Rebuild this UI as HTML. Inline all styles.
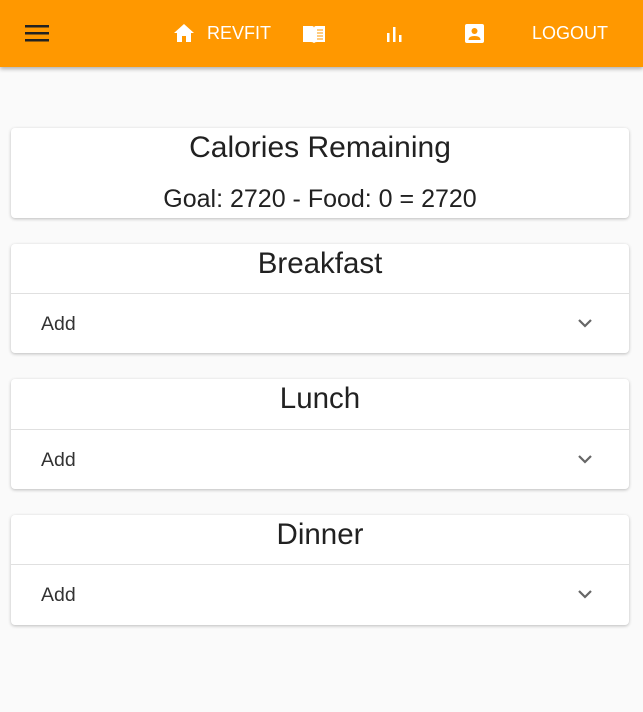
<!DOCTYPE html>
<html><head><style>
body{margin:0;width:643px;height:712px;background:#fafafa;font-family:"Liberation Sans",sans-serif;color:#212121;overflow:hidden;position:relative}
.hdr{position:absolute;left:0;top:0;width:643px;height:67px;background:#ff9800;box-shadow:0 2px 4px rgba(0,0,0,.3)}
.hdr .t{position:absolute;color:#fff;font-size:18px;top:23px}
.card{position:absolute;left:11px;width:618px;background:#fff;border-radius:4px;box-shadow:0 1px 3px rgba(0,0,0,.25)}
.title{text-align:center;font-size:29.5px;position:absolute;width:100%}
.div{position:absolute;left:0;width:100%;height:1px;background:#e0e0e0}
.add{position:absolute;left:30px;font-size:19.5px;color:#333}
.chev{position:absolute;left:565px}
</style></head><body>
<div class="hdr">
<svg style="position:absolute;left:25px;top:23px" width="24" height="20" viewBox="0 0 24 20"><rect x="0" y="2" width="24" height="2.5" fill="#222"/><rect x="0" y="9" width="24" height="2.5" fill="#222"/><rect x="0" y="16" width="24" height="2.5" fill="#222"/></svg>
<svg style="position:absolute;left:173px;top:23px" width="22" height="20" viewBox="0 0 22 20"><path d="M11 1L1 10h3v9h5v-6h4v6h5v-9h3z" fill="#fff"/></svg>
<span class="t" style="left:207px">REVFIT</span>
<svg style="position:absolute;left:302px;top:24px" width="24" height="20" viewBox="0 0 24 20"><path d="M1 2h9q2 0 2 2v15q-1-1-3-1H1z M23 2h-9q-2 0-2 2v15q1-1 3-1h8z" fill="#fff"/><path d="M15 6h6M15 9h6M15 12h6M15 15h6" stroke="#ff9800" stroke-width="1"/></svg>
<svg style="position:absolute;left:386px;top:25px" width="18" height="17" viewBox="0 0 18 17"><rect x="1" y="8" width="2.5" height="9" fill="#fff"/><rect x="7" y="2" width="2.5" height="15" fill="#fff"/><rect x="13" y="10" width="2.5" height="7" fill="#fff"/></svg>
<svg style="position:absolute;left:464px;top:23px" width="21" height="21" viewBox="0 0 21 21"><rect x="1" y="1" width="19" height="19" rx="2" fill="#fff"/><circle cx="10.5" cy="8" r="3" fill="#ff9800"/><path d="M4.5 17q0-4 6-4t6 4z" fill="#ff9800"/></svg>
<span class="t" style="left:532px">LOGOUT</span>
</div>
<div class="card" style="top:128px;height:90px">
<div class="title" style="top:3px;font-size:30px">Calories Remaining</div>
<div class="title" style="top:57px;font-size:25px">Goal: 2720 - Food: 0 = 2720</div>
</div>
<div class="card" style="top:244px;height:109px">
<div class="title" style="top:3px">Breakfast</div><div class="div" style="top:49px"></div>
<div class="add" style="top:69px">Add</div>
<svg class="chev" style="top:73px" width="18" height="12" viewBox="0 0 18 12"><path d="M3 3l6 6 6-6" stroke="#666" stroke-width="2.2" fill="none"/></svg>
</div>
<div class="card" style="top:379px;height:110px">
<div class="title" style="top:3px">Lunch</div><div class="div" style="top:50px"></div>
<div class="add" style="top:70px">Add</div>
<svg class="chev" style="top:74px" width="18" height="12" viewBox="0 0 18 12"><path d="M3 3l6 6 6-6" stroke="#666" stroke-width="2.2" fill="none"/></svg>
</div>
<div class="card" style="top:515px;height:110px">
<div class="title" style="top:3px">Dinner</div><div class="div" style="top:49px"></div>
<div class="add" style="top:69px">Add</div>
<svg class="chev" style="top:73px" width="18" height="12" viewBox="0 0 18 12"><path d="M3 3l6 6 6-6" stroke="#666" stroke-width="2.2" fill="none"/></svg>
</div>
</body></html>
